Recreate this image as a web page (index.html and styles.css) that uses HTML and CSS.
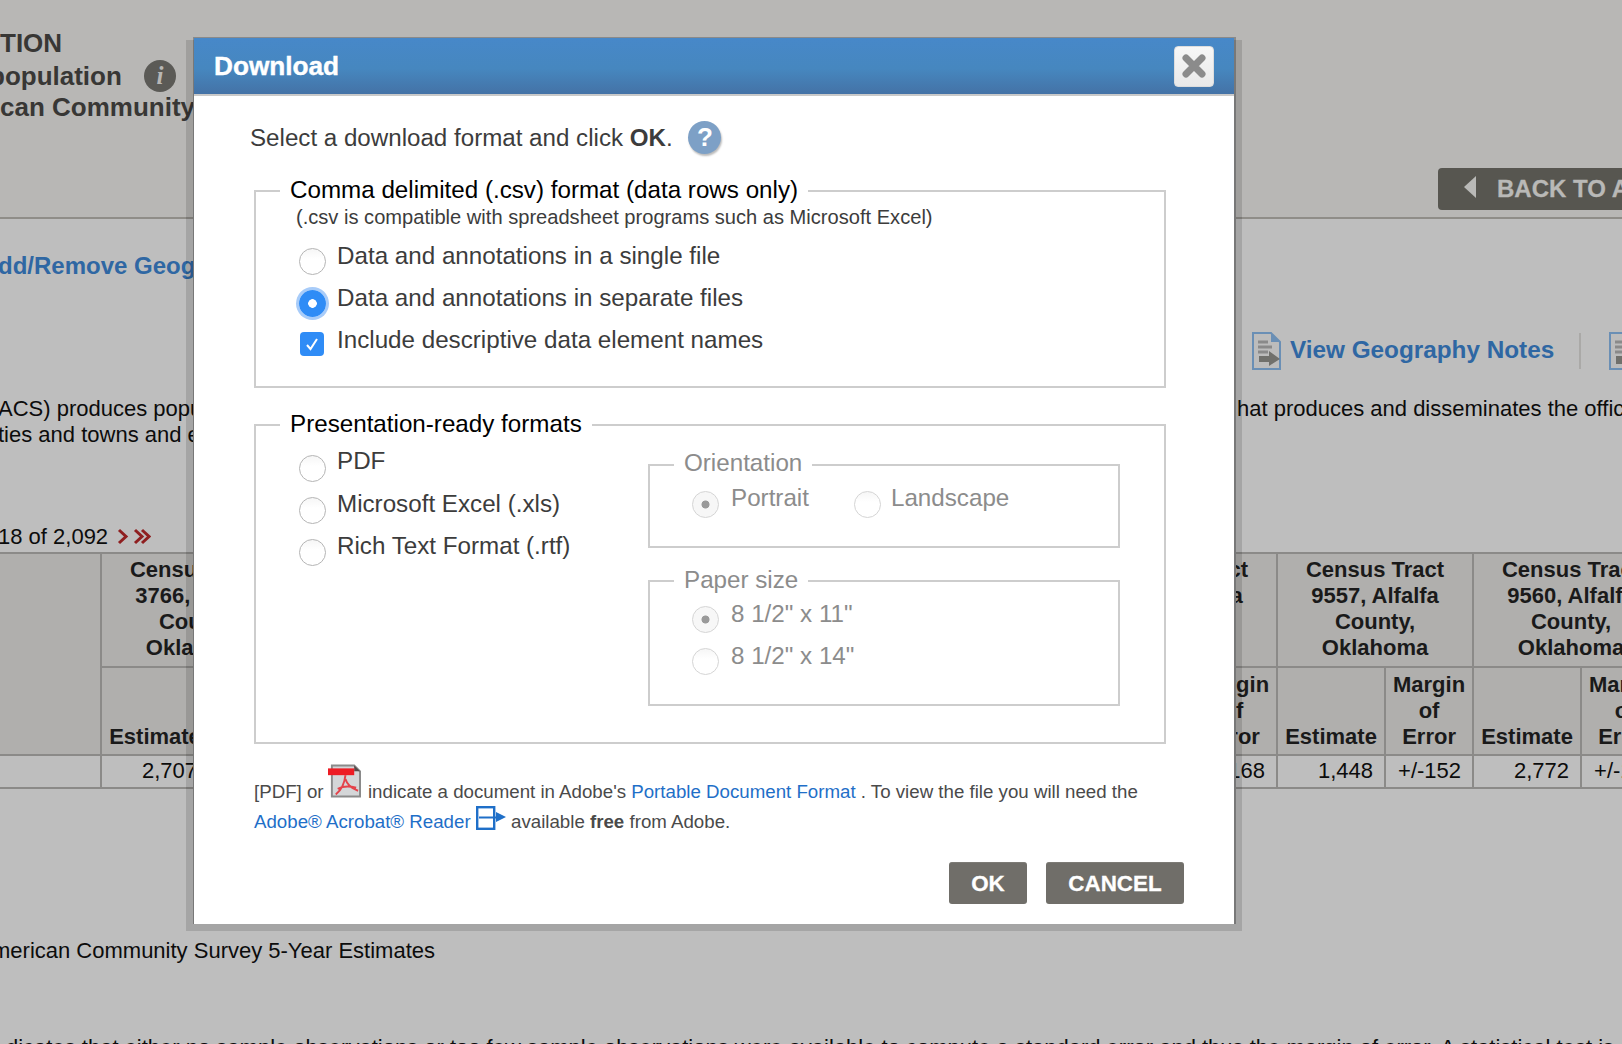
FILE: index.html
```html
<!DOCTYPE html>
<html lang="en">
<head>
<meta charset="utf-8">
<title>Download</title>
<link rel="stylesheet" href="styles.css">
</head>
<body>
<div class="page">
  <header class="masthead">
    <div class="title">
      <div class="t1">TION</div>
      <div class="t2"><span>population</span><span class="info">i</span></div>
      <div class="t3">can Community</div>
    </div>
    <a class="back"><svg class="back-arrow" width="13" height="22" viewBox="0 0 13 22"><path d="M12 0V22L0 11Z" fill="#b9b9b7"/></svg>BACK TO ADVANCED SEARCH</a>
  </header>
  <a class="add-link">dd/Remove Geographies</a>
  <div class="tools">
    <svg class="doc" width="29" height="38" viewBox="0 0 29 38"><path d="M1 1H19L28 10V37H1Z" fill="#bcbcbc" stroke="#6a8fb5" stroke-width="2"/><path d="M19 1V10H28" fill="#6a8fb5"/><path d="M6 10H16M6 15H20M6 20H16" stroke="#8a8a8a" stroke-width="3"/><path d="M7 24H17V19L28 27L17 34V30H7Z" fill="#70706c"/></svg>
    <a class="tool-link">View Geography Notes</a>
    <span class="tool-sep"></span>
    <svg class="doc" width="29" height="38" viewBox="0 0 29 38"><path d="M1 1H19L28 10V37H1Z" fill="#bcbcbc" stroke="#6a8fb5" stroke-width="2"/><path d="M6 10H28M6 15H28M6 20H28" stroke="#8a8a8a" stroke-width="3"/><path d="M7 24H28V32H7Z" fill="#70706c"/></svg>
  </div>
  <div class="intro">
    <p class="intro-left">ACS) produces population<br>ties and towns and estimates</p>
    <p class="intro-right">hat produces and disseminates the official estimates</p>
  </div>
  <div class="pager">18 of 2,092 <svg class="chev" width="34" height="17" viewBox="0 0 34 17"><path d="M2 2L9 8.5L2 15M18 2L25 8.5L18 15M25 2L32 8.5L25 15" fill="none" stroke="#8f1f20" stroke-width="3"/></svg></div>
  <table class="data">
    <colgroup>
      <col class="c-stub">
      <col class="c-est"><col class="c-moe"><col class="c-est"><col class="c-moe"><col class="c-est"><col class="c-moe"><col class="c-est"><col class="c-moe">
      <col class="c-est"><col class="c-moe"><col class="c-est"><col class="c-moe"><col class="c-est"><col class="c-moe"><col class="c-est"><col class="c-moe">
    </colgroup>
    <tr class="r-head">
      <th rowspan="2"></th>
      <th colspan="2">Census Tract<br>3766, Alfalfa<br>County,<br>Oklahoma</th>
      <th colspan="2"></th><th colspan="2"></th><th colspan="2"></th><th colspan="2"></th>
      <th colspan="2">Census Tract<br>9556, Alfalfa<br>County,<br>Oklahoma</th>
      <th colspan="2">Census Tract<br>9557, Alfalfa<br>County,<br>Oklahoma</th>
      <th colspan="2">Census Tract<br>9560, Alfalfa<br>County,<br>Oklahoma</th>
    </tr>
    <tr class="r-sub">
      <th>Estimate</th><th></th><th></th><th></th><th></th><th></th><th></th><th></th><th></th><th></th>
      <th></th><th>Margin<br>of<br>Error</th>
      <th>Estimate</th><th>Margin<br>of<br>Error</th>
      <th>Estimate</th><th>Margin<br>of<br>Error</th>
    </tr>
    <tr class="r-data">
      <td></td><td>2,707</td><td></td><td></td><td></td><td></td><td></td><td></td><td></td><td></td><td></td>
      <td></td><td>+/-168</td><td>1,448</td><td>+/-152</td><td>2,772</td><td>+/-185</td>
    </tr>
  </table>
  <p class="source">merican Community Survey 5-Year Estimates</p>
  <p class="explain">dicates that either no sample observations or too few sample observations were available to compute a standard error and thus the margin of error. A statistical test is</p>
</div>

<section class="dialog">
  <header class="dialog-head">
    <h1>Download</h1>
    <button class="close" aria-label="Close"><svg width="28" height="28" viewBox="0 0 28 28"><path d="M6 6L22 22M22 6L6 22" stroke="#8b8b8b" stroke-width="7" stroke-linecap="round"/></svg></button>
  </header>
  <div class="dialog-body">
    <p class="lead">Select a download format and click <b>OK</b>. <span class="help">?</span></p>

    <fieldset class="box box-csv">
      <legend>Comma delimited (.csv) format (data rows only)</legend>
      <p class="sub">(.csv is compatible with spreadsheet programs such as Microsoft Excel)</p>
      <div class="opt"><span class="radio"></span>Data and annotations in a single file</div>
      <div class="opt"><span class="radio on"></span>Data and annotations in separate files</div>
      <div class="opt"><span class="check"><svg width="16" height="16" viewBox="0 0 16 16"><path d="M3 9L6.5 13L13 3" fill="none" stroke="#fff" stroke-width="2"/></svg></span>Include descriptive data element names</div>
    </fieldset>

    <fieldset class="box box-ready">
      <legend>Presentation-ready formats</legend>
      <div class="ready">
        <div class="ready-left">
          <div class="opt"><span class="radio"></span>PDF</div>
          <div class="opt"><span class="radio"></span>Microsoft Excel (.xls)</div>
          <div class="opt"><span class="radio"></span>Rich Text Format (.rtf)</div>
        </div>
        <div class="ready-right">
          <fieldset class="box box-orient off">
            <legend>Orientation</legend>
            <div class="opt-line">
              <div class="opt"><span class="radio sel"></span>Portrait</div>
              <div class="opt opt-land"><span class="radio"></span>Landscape</div>
            </div>
          </fieldset>
          <fieldset class="box box-paper off">
            <legend>Paper size</legend>
            <div class="paper-rows">
              <div class="opt"><span class="radio sel"></span>8 1/2" x 11"</div>
              <div class="opt"><span class="radio"></span>8 1/2" x 14"</div>
            </div>
          </fieldset>
        </div>
      </div>
    </fieldset>

    <p class="note">[PDF] or <svg class="ico-pdf" width="33" height="34" viewBox="0 0 34 34"><path d="M4 1H27L33 7V33H4Z" fill="#d4d6d8" stroke="#8a8a8a" stroke-width="2"/><path d="M27 1V7H33" fill="#5a4a4a"/><rect x="0" y="4" width="27" height="7" fill="#ed1c24"/><path d="M18 11C17 20 13 27 8 31M18 15C20 22 25 25 31 27M10 25C16 22 22 22 29 24" fill="none" stroke="#e4424a" stroke-width="2"/></svg> indicate a document in Adobe's <a>Portable Document Format</a> . To view the file you will need the</p>
    <p class="note"><a>Adobe® Acrobat® Reader</a> <svg class="ico-ext" width="30" height="24" viewBox="0 0 30 24"><rect x="1.2" y="1.2" width="17" height="21.6" fill="none" stroke="#1f6fc8" stroke-width="2.4"/><path d="M3 11.5H20" stroke="#1f6fc8" stroke-width="2"/><path d="M20 6V16L30 11Z" fill="#1f6fc8"/></svg> available <b>free</b> from Adobe.</p>

    <div class="actions">
      <button class="btn btn-ok">OK</button>
      <button class="btn btn-cancel">CANCEL</button>
    </div>
  </div>
</section>
</body>
</html>
```
FILE: styles.css
```css
html, body { margin: 0; padding: 0; height: 1044px; overflow: hidden; background: #bebebe; }
body { font-family: "Liberation Sans", Arial, sans-serif; color: #0c0c0c; position: relative; }
p { margin: 0; }
.page { height: 1044px; overflow: hidden; font-size: 22px; line-height: 26px; }

/* background page */
.masthead { height: 217px; border-bottom: 2px solid #8f8d88; background: #b8b7b5; display: flex; justify-content: space-between; }
.title { padding-top: 27px; font-size: 26px; font-weight: bold; line-height: 32px; color: #383735; white-space: nowrap; }
.t2 { display: flex; align-items: center; height: 32px; margin-left: -11px; padding-top: 1px; margin-bottom: -1px; }
.info { width: 32px; height: 32px; margin-left: 22px; border-radius: 50%; background: #5b5a56; color: #b8b7b5; font: italic bold 25px/32px "Liberation Serif", serif; text-align: center; }
.back { box-sizing: border-box; width: 250px; height: 42px; margin: 168px -66px 0 0; padding-left: 59px; border-radius: 4px; background: #575650; color: #b9b9b7; font-size: 24px; font-weight: bold; line-height: 42px; white-space: nowrap; overflow: hidden; position: relative; -webkit-text-stroke: .3px #b9b9b7; }
.back-arrow { position: absolute; left: 26px; top: 8px; }
.add-link { display: block; margin: 33px 0 0 -2px; color: #2f67a3; font-size: 24px; font-weight: bold; line-height: 28px; white-space: nowrap; }
.tools { display: flex; align-items: center; margin: 52px 0 0 1252px; height: 38px; width: 400px; }
.doc { flex: none; }
.tool-link { margin: -2px 0 0 9px; color: #2f67a3; font-size: 24.3px; font-weight: bold; white-space: nowrap; }
.tool-sep { flex: none; width: 2px; height: 36px; margin: 0 28px 0 25px; background: #aaa9a7; }
.intro { display: flex; margin: 26px 0 0 -2px; white-space: nowrap; }
.intro-left { width: 1239px; flex: none; }
.pager { margin: 76px 0 0 -2px; height: 26px; white-space: nowrap; }
.chev { vertical-align: -1px; margin-left: 3px; }
.data { border-collapse: collapse; table-layout: fixed; width: 1669px; margin-top: 2px; color: #0c0c0c; }
.c-stub { width: 101px; }
.c-est { width: 108px; }
.c-moe { width: 88px; }
.data th, .data td { border: 2px solid #8b8a88; padding: 0; overflow: hidden; white-space: nowrap; }
.data tr > :first-child { border-left: 0; }
.data th { background: #b0afad; color: #1a1a1a; text-align: center; font-weight: bold; }
.r-head th { height: 114px; box-sizing: border-box; vertical-align: middle; padding-bottom: 2px; }
.r-sub th { height: 88px; vertical-align: bottom; padding-bottom: 4px; box-sizing: border-box; }
.r-data td { height: 33px; box-sizing: border-box; text-align: right; padding-right: 11px; padding-bottom: 2px; }
.source { margin: 149px 0 0 -8px; white-space: nowrap; }
.explain { margin: 71px 0 0 6px; white-space: nowrap; }

/* dialog */
.dialog { position: absolute; left: 193px; top: 37px; box-sizing: border-box; width: 1043px; height: 887px; background: #fff; border: solid #8a8a8a; border-width: 1px 2px 2px 1px; z-index: 1; }
.dialog::before { content: ""; position: absolute; left: -8px; right: -8px; top: 2px; bottom: -9px; background: rgba(0,0,0,.13); z-index: -1; }
.dialog-head { height: 56px; border-bottom: 2px solid #c9c9c9; background: linear-gradient(#4788c9, #4687bf 55%, #4472a6); display: flex; align-items: center; justify-content: space-between; padding: 0 20px; position: relative; }
.dialog-head h1 { margin: 0; color: #fff; font-size: 26.2px; font-weight: bold; -webkit-text-stroke: .4px #fff; }
.close { width: 40px; height: 41px; padding: 0; border: 1px solid #ddd; border-radius: 4px; background: linear-gradient(#f7f7f7, #e9e9e9); display: flex; align-items: center; justify-content: center; }
.dialog-body { background: #fff; height: 828px; position: relative; color: #3c3c3c; font-size: 24.2px; }
.lead { height: 80px; padding-left: 56px; font-size: 24.15px; line-height: 84px; color: #3c3c3c; white-space: nowrap; }
.help { display: inline-block; width: 33px; height: 33px; margin-left: 9px; border-radius: 50%; background: #7da0c6; color: #fff; font-size: 26px; font-weight: bold; line-height: 33px; text-align: center; vertical-align: 0; box-shadow: 1px 2px 2px #bbb; }
.box { margin: 0; padding: 0; border: 2px solid #cdcdcd; box-sizing: border-box; min-width: 0; }
.box > legend { margin-left: 24px; padding: 0 10px 2px; color: #000; font-size: 24.2px; line-height: 28px; white-space: nowrap; }
.box-csv { width: 912px; height: 212px; margin-left: 60px; }
.box-ready { width: 912px; height: 334px; margin: 22px 0 0 60px; }
.sub { margin-top: -2px; padding-left: 40px; height: 32px; font-size: 20.1px; line-height: 26px; white-space: nowrap; }
.opt { display: flex; align-items: flex-start; height: 42px; padding-left: 43px; line-height: 40px; white-space: nowrap; }
.radio { flex: none; box-sizing: border-box; width: 27px; height: 27px; margin: 12px 11px 0 0; border: 1px solid #b5b5b5; border-radius: 50%; background: linear-gradient(#f6f6f6, #fff 40%); }
.radio.on { background: radial-gradient(circle, #fff 0 4px, #2f8cf6 4.6px); border: 0; box-shadow: 0 0 0 3px #a8ccf9; }
.radio.sel { background: radial-gradient(circle, #9a9a9a 0 3.6px, #f7f7f7 4.4px); border-color: #d0d0d0; }
.check { flex: none; width: 24px; height: 24px; margin: 12px 13px 0 1px; border-radius: 4px; background: #2f8cf6; display: flex; align-items: center; justify-content: center; }
.ready { display: flex; }
.ready-left { flex: none; width: 392px; padding-top: 1px; }
.ready-left .opt { height: 42.5px; }
.ready-left .radio { margin-top: 14px; }
.ready-left .opt + .opt .radio { margin-top: 13px; }
.ready-right { margin-top: 9px; width: 472px; }
.box-orient { height: 99px; }
.box-orient > legend { padding-bottom: 4px; }
.box-paper { height: 140px; margin-top: 18px; }
.off > legend, .off .opt { color: #8c8c8c; }
.off .radio { margin-right: 12px; border-color: #d5d5d5; }
.opt-line { display: flex; margin-top: -3px; }
.box-orient .radio { margin-top: 13px; }
.box-orient .opt, .box-paper .opt { padding-left: 42px; }
.box-orient .opt-land { padding-left: 45px; }
.off .opt-land .radio { margin-right: 10px; }
.paper-rows { margin-top: -2px; }
.note { height: 30px; padding-left: 60px; font-size: 18.7px; line-height: 30px; color: #4a4a4a; white-space: nowrap; }
.box-ready + .note { margin-top: 33px; }
.note a { color: #1f6fc8; }
.ico-pdf { vertical-align: 0; margin: -14px 2px 0 -1px; }
.ico-ext { vertical-align: -2px; margin-top: -10px; }
.actions { display: flex; justify-content: flex-end; gap: 19px; margin-top: 25px; padding-right: 50px; }
.btn { height: 42px; padding: 0; border: 0; border-top: 1px solid #7d7b76; border-radius: 3px; background: #706e69; color: #fff; font-family: inherit; font-size: 22.4px; font-weight: bold; -webkit-text-stroke: .3px #fff; }
.btn-ok { width: 78px; }
.btn-cancel { width: 138px; }
```
